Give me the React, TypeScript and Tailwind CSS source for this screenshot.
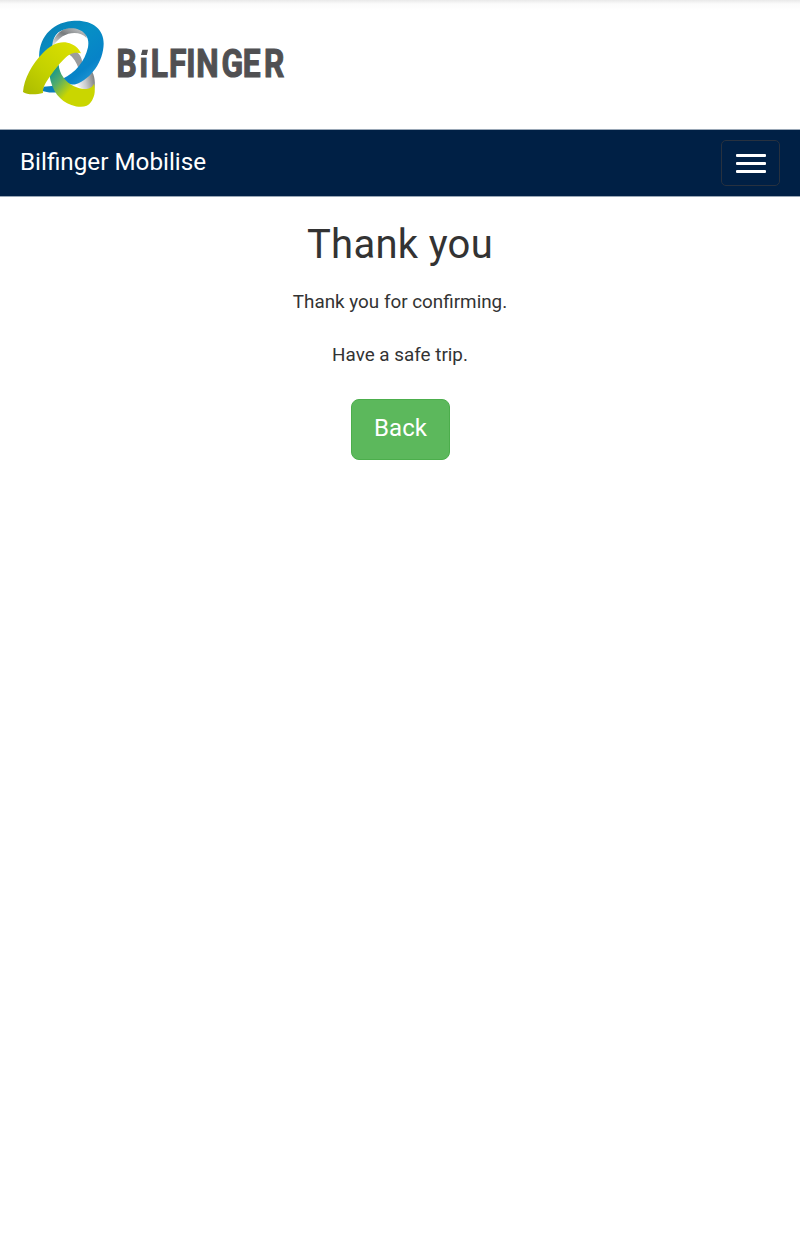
function LogoMark() {
  return (
    <svg className="h-[110px] w-[110px]" viewBox="0 0 330 330" aria-hidden>
      <defs>
        <linearGradient id="blue" x1="0.1" y1="0" x2="0.9" y2="1">
          <stop offset="0" stopColor="#087fb5" />
          <stop offset="0.4" stopColor="#078fc5" />
          <stop offset="0.75" stopColor="#0783c8" />
          <stop offset="1" stopColor="#2d9fda" />
        </linearGradient>
        <linearGradient id="green" x1="0" y1="1" x2="1" y2="0">
          <stop offset="0" stopColor="#aaba00" />
          <stop offset="0.4" stopColor="#c3d100" />
          <stop offset="1" stopColor="#dfe200" />
        </linearGradient>
        <linearGradient id="teal" gradientUnits="userSpaceOnUse" x1="118" y1="192" x2="185" y2="250">
          <stop offset="0" stopColor="#16968e" />
          <stop offset="0.4" stopColor="#55ad68" />
          <stop offset="0.9" stopColor="#cad600" />
        </linearGradient>
        <linearGradient id="innerTop" x1="0" y1="1" x2="1" y2="0">
          <stop offset="0" stopColor="#f4f4f4" />
          <stop offset="0.5" stopColor="#777b7d" />
          <stop offset="1" stopColor="#d8dadb" />
        </linearGradient>
        <linearGradient id="innerRight" x1="0" y1="0.5" x2="1" y2="0.3">
          <stop offset="0" stopColor="#ffffff" />
          <stop offset="0.5" stopColor="#c8cacb" />
          <stop offset="1" stopColor="#77797a" />
        </linearGradient>
      </defs>
      <path d="M124 108C134 66 170 44 206 54C222 60 229 68 230 84C213 65 181 65 158 79C145 88 137 96 132 106Z" fill="url(#innerTop)" />
      <path d="M196 122C210 132 217 145 217 162L206 176C200 158 190 142 176 132Z" fill="#9b9c9d" />
      <path d="M244 180C254 196 258 222 252 240C240 244 215 238 194 222C218 214 232 204 244 180Z" fill="url(#innerRight)" />
      <path d="M101 230C112 229 122 230 134 225L145 245C128 250 110 247 97 243Z" fill="#0a7ebb" />
      <path
        d="M88 147C84 88 122 39 185 33C242 27 282 55 281 101C280 154 245 205 197 223C183 226 166 218 158 206C196 190 225 153 234 112C242 76 214 51 176 55C141 60 125 84 127 116Z"
        fill="url(#blue)"
      />
      <path
        d="M118 194L146 164C148 191 166 216 192 229C215 240 243 242 252 221C258 246 252 263 243 276C232 293 209 294 184 285C150 272 126 245 118 194Z"
        fill="url(#teal)"
      />
      <path
        d="M39 246C42 206 66 163 98 130C122 105 147 93 172 98C191 102 207 114 213 130C205 128 190 127 178 134C164 142 138 172 118 202C106 220 97 234 99 249C80 254 50 255 39 246Z"
        fill="url(#green)"
      />
    </svg>
  );
}

function Wordmark() {
  return (
    <svg className="h-[54px] w-[180px]" viewBox="0 -7 180 54" role="img" aria-label="Bilfinger">
      <text
        x="7.8 35.2 48.7 70.7 91.2 103.2 133.6 159 184.3"
        y="32.4"
        transform="scale(.835 1)"
        strokeWidth="1.1"
        className="fill-[#505052] stroke-[#505052] font-['Roboto',sans-serif] text-[38px] font-bold"
      >
        BiLFINGER
      </text>
      {/* slanted dot on the i */}
      <path d="M29.5 2H40V12.6H29.5Z" fill="white" />
      <path d="M32.4 4.8H38L36.8 10H31Z" fill="#505052" />
    </svg>
  );
}

function MenuButton() {
  return (
    <button
      type="button"
      aria-label="Toggle navigation"
      className="mt-[10px] flex h-[46px] w-[59px] flex-col items-center justify-center gap-[5px] rounded-[5px] border border-[#27313f]"
    >
      <span className="h-[3px] w-[30px] rounded-[1px] bg-white" />
      <span className="h-[3px] w-[30px] rounded-[1px] bg-white" />
      <span className="h-[3px] w-[30px] rounded-[1px] bg-white" />
    </button>
  );
}

export default function App() {
  return (
    <div className="min-h-screen bg-white font-['Roboto',sans-serif] text-[18.85px] text-[#333]">
      <div className="h-[10px] bg-linear-to-b from-[#e9e9e9] via-[#fbfbfb] via-40% to-white" />
      <header className="flex h-[119px] pl-[10px]">
        <LogoMark />
        <div className="-ml-[10px] pt-[28px]">
          <Wordmark />
        </div>
      </header>
      <nav className="flex h-[68px] items-start justify-between border-y border-[#99a7b6] bg-[#002045] pr-5 pl-5">
        <a href="#" className="pt-[19px] text-[24.25px] leading-[27px] text-white">
          Bilfinger Mobilise
        </a>
        <MenuButton />
      </nav>
      <main className="flex flex-col items-center text-center">
        <h1 className="mt-[26px] text-[40px] leading-[44px] tracking-[0.3px]">Thank you</h1>
        <p className="mt-[22px] leading-[27px]">Thank you for confirming.</p>
        <p className="mt-[26px] leading-[27px]">Have a safe trip.</p>
        <button
          type="button"
          className="mt-[30px] ml-px h-[61px] w-[99px] rounded-lg border border-[#4cae4c] bg-[#5cb85c] pb-[3px] text-2xl tracking-[0.1px] text-white"
        >
          Back
        </button>
      </main>
    </div>
  );
}
